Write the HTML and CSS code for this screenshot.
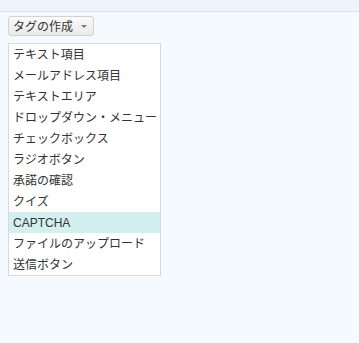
FILE: index.html
```html
<!DOCTYPE html>
<html lang="ja">
<head>
<meta charset="utf-8">
<link rel="stylesheet" href="styles.css">
</head>
<body>
<div class="topbar"></div>
<main class="content">
  <button class="btn">タグの作成<span class="caret"></span></button>
  <ul class="menu">
    <li>テキスト項目</li>
    <li>メールアドレス項目</li>
    <li>テキストエリア</li>
    <li>ドロップダウン・メニュー</li>
    <li>チェックボックス</li>
    <li>ラジオボタン</li>
    <li>承諾の確認</li>
    <li>クイズ</li>
    <li class="active">CAPTCHA</li>
    <li>ファイルのアップロード</li>
    <li>送信ボタン</li>
  </ul>
</main>
</body>
</html>
```

FILE: styles.css
```css
html, body {
  margin: 0;
  padding: 0;
  background: #f4faff;
  font-family: "Liberation Sans", "Noto Sans CJK JP", sans-serif;
  color: #333;
}
.topbar {
  height: 11px;
  background: #eef4fc;
  border-bottom: 1px solid #d3e2e6;
}
.content {
  padding: 4px 8px;
  display: flex;
  flex-direction: column;
  align-items: flex-start;
}
.btn {
  display: flex;
  align-items: center;
  height: 20px;
  width: 86px;
  padding: 1px 0 0 4px;
  margin: 0;
  border: 1px solid #cfd3d6;
  border-radius: 3px;
  background: linear-gradient(#fafafa, #e9eaeb);
  font-family: inherit;
  font-size: 12px;
  color: #333;
  line-height: 18px;
}
.caret {
  width: 0;
  height: 0;
  margin-left: 8px;
  border-left: 3px solid transparent;
  border-right: 3px solid transparent;
  border-top: 3px solid #777;
}
.menu {
  list-style: none;
  margin: 7px 0 0 0;
  padding: 0;
  width: 151px;
  background: #fff;
  border: 1px solid #d6dadc;
}
.menu li {
  height: 20px;
  line-height: 20px;
  padding: 1px 0 0 4px;
  font-size: 12px;
  white-space: nowrap;
}
.menu li.active {
  background: #d3eff0;
}
```
